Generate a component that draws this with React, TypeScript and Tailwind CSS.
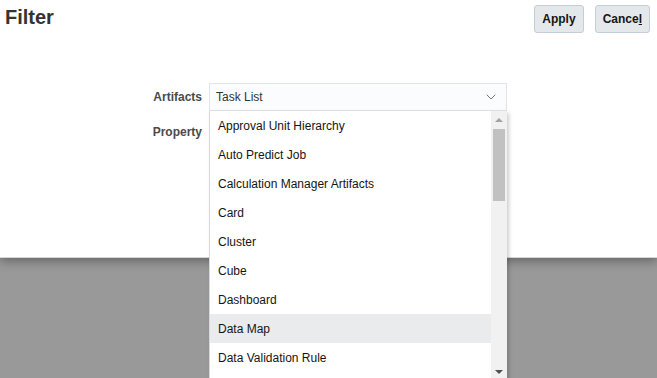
import { ChevronDown } from 'lucide-react'

const items = [
  'Approval Unit Hierarchy',
  'Auto Predict Job',
  'Calculation Manager Artifacts',
  'Card',
  'Cluster',
  'Cube',
  'Dashboard',
  'Data Map',
  'Data Validation Rule',
]

export default function App() {
  return (
    <div className="relative w-[657px] h-[378px] overflow-hidden bg-[#999999] font-['Liberation_Sans',Arial,sans-serif]">
      <div className="relative z-10 h-[258px] bg-white border-b border-[#d6d6d6] shadow-[0_3px_10px_rgba(0,0,0,0.35)]">
        <div className="flex items-start justify-between pl-[5px] pr-[7px] pt-[5px]">
          <h1 className="text-[20px] font-bold leading-[24px] text-[#333333]">Filter</h1>
          <div className="flex gap-[11px]">
            <button className="h-[28px] px-[7px] rounded-[3px] border border-[#c4ced7] bg-[#e4e8ea] text-[12px] font-bold text-[#161513]">
              Apply
            </button>
            <button className="h-[28px] px-[7px] rounded-[3px] border border-[#c4ced7] bg-[#e4e8ea] text-[12px] font-bold text-[#161513]">
              Cance<span className="underline">l</span>
            </button>
          </div>
        </div>

        <div className="mt-[50px] grid grid-cols-[202px_298px] gap-x-[7px] gap-y-[7px] text-[12px]">
          <div className="flex h-[28px] items-center justify-end font-bold text-[#4a4a4a]">Artifacts</div>
          <div className="flex h-[28px] items-center justify-between border border-[#dfe4e7] bg-[#fbfcfd] pl-[6px] pr-[7px] text-[#333333]">
            <span>Task List</span>
            <ChevronDown size={16} strokeWidth={1.5} className="text-[#777]" />
          </div>
          <div className="flex h-[28px] items-center justify-end font-bold text-[#4a4a4a]">Property</div>
          <div />
        </div>
      </div>

      <div className="absolute left-[209px] top-[111px] z-20 flex w-[298px] h-[280px] border-l border-[#d9d9d9] bg-white shadow-[2px_2px_4px_rgba(0,0,0,0.2)]">
        <ul className="flex-1 text-[12px] text-[#161513]">
          {items.map(item => (
            <li
              key={item}
              className={`flex h-[29px] items-center pl-[8px] ${item === 'Data Map' ? 'bg-[#eaebec]' : ''}`}
            >
              {item}
            </li>
          ))}
        </ul>
        <div className="relative w-[16px] bg-[#f1f1f1]">
          <div className="absolute left-[4px] top-[7px] h-0 w-0 border-x-[4px] border-b-[4px] border-x-transparent border-b-[#a3a3a3]" />
          <div className="absolute left-[2px] top-[18px] h-[72px] w-[12px] bg-[#c1c1c1]" />
          <div className="absolute left-[4px] top-[259px] h-0 w-0 border-x-[4px] border-t-[4px] border-x-transparent border-t-[#505050]" />
        </div>
      </div>
    </div>
  )
}
